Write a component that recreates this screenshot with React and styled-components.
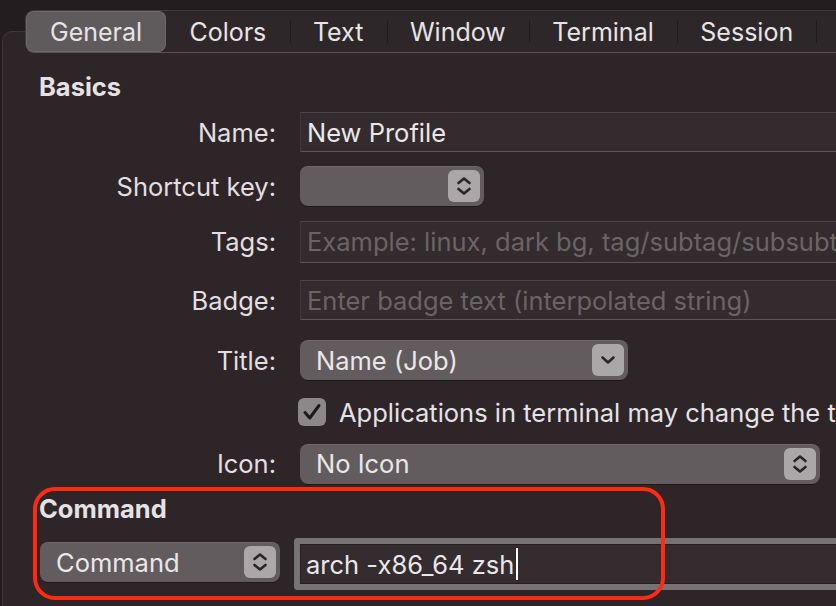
import React from 'react';
import styled, { createGlobalStyle } from 'styled-components';

const GlobalStyle = createGlobalStyle`
  html, body {
    margin: 0;
    padding: 0;
    background: #241d20;
  }
  body {
    font-family: Inter, "Noto Sans", "Liberation Sans", sans-serif;
    font-size: 25.5px;
    color: #e6e2e3;
    -webkit-font-smoothing: antialiased;
  }
`;

const Page = styled.div`
  width: 836px;
  height: 606px;
  overflow: hidden;
  box-sizing: border-box;
  padding: 31px 0 0 2px;
`;

const Panel = styled.div`
  position: relative;
  width: 940px;
  height: 100%;
  box-sizing: border-box;
  background: #2d2528;
  border-top: 1px solid #3d3739;
  border-left: 1px solid #3d3739;
  border-top-left-radius: 10px;
  padding: 0 0 0 36px;
`;

const TabBar = styled.div`
  position: relative;
  z-index: 1;
  display: flex;
  align-items: stretch;
  height: 43px;
  box-sizing: border-box;
  margin: -22px 0 0 -14px;
  background: #2e2729;
  border: 1px solid #403a3c;
  border-bottom-color: #5a5456;
  border-right: none;
  border-radius: 9px 0 0 9px;
`;

const Tab = styled.div`
  display: flex;
  align-items: center;
  padding: ${(p) => (p.$active ? '0 24px' : '0 23.3px')};
  font-size: 25px;
  color: #e8e4e5;
  white-space: nowrap;
  border-radius: 8px;
  background: ${(p) => (p.$active ? '#5f5a5c' : 'transparent')};
  box-shadow: ${(p) => (p.$active ? 'inset 0 0 0 1px #6c6769' : 'none')};
`;

const TabSep = styled.div`
  width: 1px;
  height: 23px;
  margin-right: -1px;
  align-self: center;
  background: ${(p) => (p.$hidden ? 'transparent' : '#1f1a1c')};
`;

const Heading = styled.div`
  line-height: 30px;
  font-weight: 700;
  color: #e6e2e3;
  margin-top: ${(p) => p.$top}px;
`;

const Row = styled.div`
  display: grid;
  grid-template-columns: 237px 1fr;
  column-gap: 24px;
  align-items: center;
  height: ${(p) => p.$h}px;
`;

const Label = styled.div`
  text-align: right;
  color: #e3dfe0;
  white-space: nowrap;
`;

const Form = styled.div`
  margin-top: 3px;
`;

const TextField = styled.div`
  height: ${(p) => p.$h || 40}px;
  box-sizing: border-box;
  display: flex;
  align-items: center;
  padding-left: 6px;
  background: #332b2e;
  border: 1px solid #403a3c;
  border-top-color: #4b4547;
  border-bottom-color: #5a5456;
  border-right: none;
  white-space: nowrap;
  overflow: hidden;
  color: ${(p) => (p.$placeholder ? '#6b6466' : '#ebe7e8')};
`;

const Popup = styled.div`
  width: ${(p) => p.$w}px;
  height: 40px;
  box-sizing: border-box;
  display: flex;
  align-items: center;
  justify-content: space-between;
  padding: 0 4px 0 16px;
  border-radius: 8px;
  background: #625c5e;
  box-shadow: 0 1px 0 rgba(0, 0, 0, 0.35), inset 0 1px 0 rgba(255, 255, 255, 0.08);
  color: #ebe7e8;
  white-space: nowrap;
  margin-top: ${(p) => p.$top || 0}px;
`;

const StepButton = styled.div`
  width: 32px;
  height: 32px;
  border-radius: 6px;
  background: #aba7a9;
  display: flex;
  align-items: center;
  justify-content: center;
  flex-shrink: 0;
`;

const CheckRow = styled.div`
  display: flex;
  align-items: center;
  gap: 13px;
  margin-left: -2px;
  color: #e6e2e3;
  white-space: nowrap;
`;

const CheckBox = styled.div`
  width: 28px;
  height: 28px;
  border-radius: 6px;
  background: #8c8789;
  display: flex;
  align-items: center;
  justify-content: center;
  flex-shrink: 0;
`;

const CommandRow = styled.div`
  display: flex;
  align-items: flex-start;
  gap: 14px;
  margin-top: 14px;
  padding-left: 1px;
`;

const FocusField = styled.div`
  flex: 1;
  height: 52px;
  box-sizing: border-box;
  display: flex;
  align-items: center;
  padding-left: 6px;
  border: 6px solid #777274;
  border-right: none;
  border-radius: 4px 0 0 4px;
  background: #342c2f;
  box-shadow: inset 0 0 0 1px #231d1f;
  color: #ebe7e8;
  white-space: nowrap;
`;

const Caret = styled.span`
  display: inline-block;
  width: 2px;
  height: 32px;
  margin-left: 2px;
  background: #ffffff;
`;

const Highlight = styled.div`
  position: absolute;
  left: 30px;
  top: 455px;
  width: 632px;
  height: 113px;
  box-sizing: border-box;
  border: 4px solid #ff2a12;
  border-radius: 22px;
  pointer-events: none;
`;

const UpDown = () => (
  <svg width="32" height="32" viewBox="0 0 32 32" fill="none">
    <path d="M10.5 13 L16 8.5 L21.5 13" stroke="#2a2426" strokeWidth="2.6" strokeLinecap="round" strokeLinejoin="round" />
    <path d="M10.5 19 L16 23.5 L21.5 19" stroke="#2a2426" strokeWidth="2.6" strokeLinecap="round" strokeLinejoin="round" />
  </svg>
);

const Down = () => (
  <svg width="32" height="32" viewBox="0 0 32 32" fill="none">
    <path d="M10.5 13.5 L16 18.5 L21.5 13.5" stroke="#2a2426" strokeWidth="2.6" strokeLinecap="round" strokeLinejoin="round" />
  </svg>
);

const Check = () => (
  <svg width="28" height="28" viewBox="0 0 28 28" fill="none">
    <path d="M7 14.5 L11.8 20 L21 7.5" stroke="#1e1a1c" strokeWidth="3" strokeLinecap="round" strokeLinejoin="round" />
  </svg>
);

const tabs = ['General', 'Colors', 'Text', 'Window', 'Terminal', 'Session'];

export default function App() {
  return (
    <>
      <GlobalStyle />
      <Page>
        <Panel>
          <TabBar>
            {tabs.map((t, i) => (
              <React.Fragment key={t}>
                {i > 0 && <TabSep $hidden={i === 1} />}
                <Tab $active={i === 0}>{t}</Tab>
              </React.Fragment>
            ))}
            <TabSep />
          </TabBar>

          <Heading $top={19}>Basics</Heading>
          <Form>
            <Row $h={54}>
              <Label>Name:</Label>
              <TextField>New Profile</TextField>
            </Row>
            <Row $h={54}>
              <Label>Shortcut key:</Label>
              <Popup $w={184}>
                <span />
                <StepButton><UpDown /></StepButton>
              </Popup>
            </Row>
            <Row $h={57}>
              <Label>Tags:</Label>
              <TextField $h={42} $placeholder>Example: linux, dark bg, tag/subtag/subsubtag</TextField>
            </Row>
            <Row $h={60}>
              <Label>Badge:</Label>
              <TextField $placeholder>Enter badge text (interpolated string)</TextField>
            </Row>
            <Row $h={60}>
              <Label>Title:</Label>
              <Popup $w={328}>
                Name (Job)
                <StepButton><Down /></StepButton>
              </Popup>
            </Row>
            <Row $h={44}>
              <span />
              <CheckRow>
                <CheckBox><Check /></CheckBox>
                Applications in terminal may change the title
              </CheckRow>
            </Row>
            <Row $h={59}>
              <Label>Icon:</Label>
              <Popup $w={520}>
                No Icon
                <StepButton><UpDown /></StepButton>
              </Popup>
            </Row>
          </Form>

          <Heading $top={1}>Command</Heading>
          <CommandRow>
            <Popup $w={240} $top={4}>
              Command
              <StepButton><UpDown /></StepButton>
            </Popup>
            <FocusField>
              arch -x86_64 zsh
              <Caret />
            </FocusField>
          </CommandRow>

          <Highlight />
        </Panel>
      </Page>
    </>
  );
}
